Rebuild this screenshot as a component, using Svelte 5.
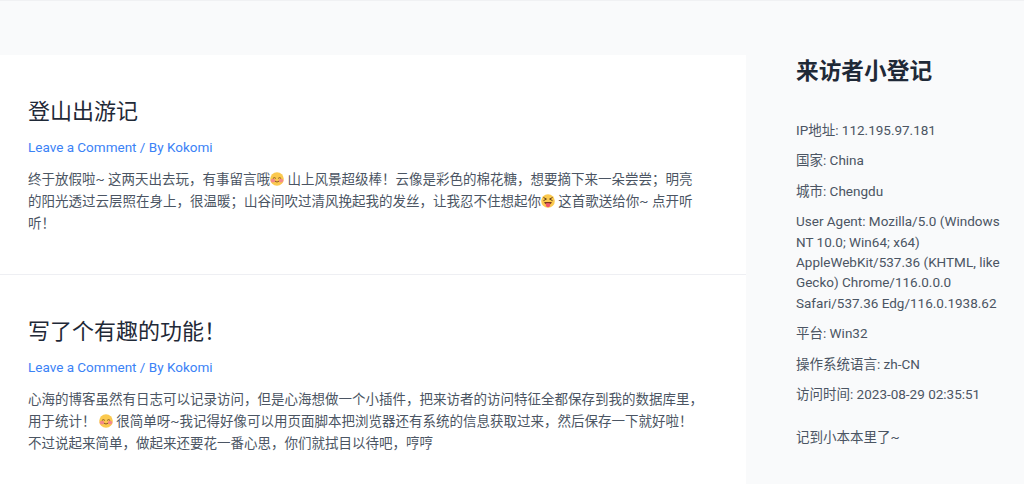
<script>
	const info = [
		'IP地址: 112.195.97.181',
		'国家: China',
		'城市: Chengdu',
		'User Agent: Mozilla/5.0 (Windows NT 10.0; Win64; x64) AppleWebKit/537.36 (KHTML, like Gecko) Chrome/116.0.0.0 Safari/537.36 Edg/116.0.1938.62',
		'平台: Win32',
		'操作系统语言: zh-CN',
		'访问时间: 2023-08-29 02:35:51'
	];
</script>

{#snippet blush()}
	<svg class="emoji" viewBox="0 0 16 16" aria-hidden="true">
		<circle cx="8" cy="8" r="7.8" fill="#fbc94e" />
		<ellipse cx="3.4" cy="9.8" rx="2.6" ry="2.1" fill="#f58a8a" />
		<ellipse cx="12.6" cy="9.8" rx="2.6" ry="2.1" fill="#f58a8a" />
		<path d="M3.6 7q1.4-1.4 2.8 0M9.6 7q1.4-1.4 2.8 0M6 10.8q2 1.6 4 0" fill="none" stroke="#7a4a1e" stroke-width="1" stroke-linecap="round" />
	</svg>
{/snippet}

{#snippet tongue()}
	<svg class="emoji" viewBox="0 0 16 16" aria-hidden="true">
		<circle cx="8" cy="8" r="7.8" fill="#fbc94e" />
		<path d="M3.2 4.2l3 1.6-3 1.6M12.8 4.2l-3 1.6 3 1.6" fill="none" stroke="#5b3a1a" stroke-width="1.1" stroke-linecap="round" stroke-linejoin="round" />
		<path d="M3.6 9h8.8q-.6 2.2-2 2.8L8 10.800 5.600 11.800Q4.200 11.200 3.600 9z" fill="#7a3b1e" />
		<path d="M5.600 10.600h4.800v2.200a2.400 2.400 0 0 1-4.800 0z" fill="#f0556a" />
	</svg>
{/snippet}

<div class="page">
	<main>
		<article>
			<h2>登山出游记</h2>
			<p class="meta">Leave a Comment / By Kokomi</p>
			<p class="body">终于放假啦~ 这两天出去玩，有事留言哦{@render blush()} 山上风景超级棒！云像是彩色的棉花糖，想要摘下来一朵尝尝；明亮的阳光透过云层照在身上，很温暖；山谷间吹过清风挽起我的发丝，让我忍不住想起你{@render tongue()} 这首歌送给你~ 点开听听！</p>
		</article>
		<article>
			<h2>写了个有趣的功能！</h2>
			<p class="meta">Leave a Comment / By Kokomi</p>
			<p class="body">心海的博客虽然有日志可以记录访问，但是心海想做一个小插件，把来访者的访问特征全都保存到我的数据库里，用于统计！ {@render blush()} 很简单呀~我记得好像可以用页面脚本把浏览器还有系统的信息获取过来，然后保存一下就好啦！<br />不过说起来简单，做起来还要花一番心思，你们就拭目以待吧，哼哼</p>
		</article>
	</main>
	<aside>
		<h3>来访者小登记</h3>
		<ul>
			{#each info as line}
				<li>{line}</li>
			{/each}
		</ul>
		<p class="note">记到小本本里了~</p>
	</aside>
</div>

<style>
	:global(body) {
		background: #f9fafb;
	}

	.page {
		display: grid;
		grid-template-columns: 746px 278px;
		height: 484px;
		overflow: hidden;
		border-top: 1px solid #f0f1f3;
		box-sizing: border-box;
		font-family: Roboto, "Noto Sans CJK SC", sans-serif;
		font-size: 13.5px;
		color: #4b5563;
	}

	main {
		margin-top: 54px;
		background: #fff;
	}

	article {
		box-sizing: border-box;
		height: 220px;
		padding: 42px 42px 0 28px;
		border-bottom: 1px solid #eeeff3;
	}

	h2 {
		margin: 0;
		font-size: 22px;
		font-weight: 400;
		line-height: 30px;
		color: #1f2937;
	}

	.meta {
		margin: 10px 0 0;
		line-height: 20px;
		color: #3b82f6;
	}

	.body {
		margin: 12px 0 0;
		line-height: 21.76px;
	}

	.emoji {
		width: 14px;
		height: 14px;
		vertical-align: -2px;
	}

	aside {
		padding: 55px 20px 0 50px;
	}

	h3 {
		margin: 0;
		font-size: 22.7px;
		font-weight: 700;
		line-height: 32px;
		color: #1f2937;
	}

	ul {
		list-style: none;
		margin: 32px 0 0;
		padding: 0;
		display: flex;
		flex-direction: column;
		gap: 10px;
		line-height: 20.4px;
	}

	.note {
		margin: 23px 0 0;
		line-height: 20.4px;
	}
</style>
